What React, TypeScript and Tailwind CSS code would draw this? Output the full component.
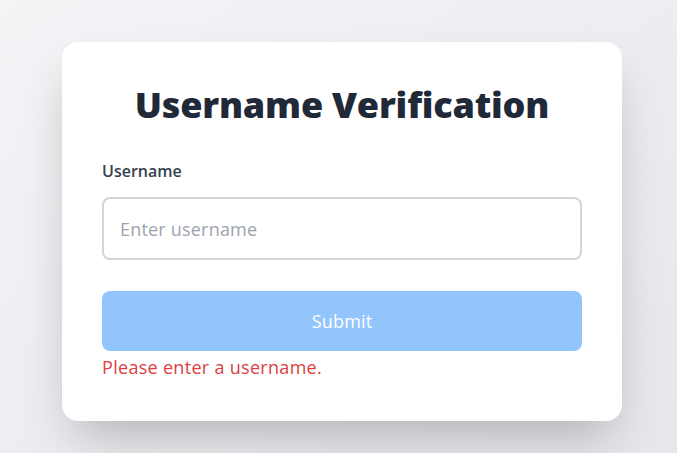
import { useState } from 'react';

export default function App() {
    const [username, setUsername] = useState('');
    const [error] = useState('Please enter a username.');

    return (
        <div
            className="min-h-screen w-full bg-gradient-to-br from-[#f3f4f6] to-[#e5e7eb] pt-[42px] pl-[62px]"
            style={{ fontFamily: '"Open Sans", "Noto Sans", sans-serif' }}
        >
            <div className="w-[560px] bg-white rounded-2xl shadow-[0_25px_50px_-12px_rgba(0,0,0,0.25)] px-10 pt-[43px] pb-10">
                <h1 className="text-[36px] leading-10 font-extrabold text-[#1f2937] text-center tracking-[-0.2px] mb-[34px]">
                    Username Verification
                </h1>
                <form onSubmit={(e) => e.preventDefault()}>
                    <label className="block text-base leading-6 font-semibold text-[#374151] mb-[14px]">Username</label>
                    <input
                        value={username}
                        onChange={(e) => setUsername(e.target.value)}
                        placeholder="Enter username"
                        className="w-full h-[63px] border-2 border-[#d1d5db] rounded-lg px-4 text-lg tracking-[0.2px] text-[#1f2937] placeholder:text-[#9ca3af] outline-none"
                    />
                    <button
                        type="submit"
                        disabled
                        className="w-full h-[60px] mt-[31px] rounded-lg bg-[#93c5fd] text-white text-lg tracking-[0.2px]"
                    >
                        Submit
                    </button>
                    <p className="text-lg leading-7 tracking-[0.3px] text-[#dc3f3f] mt-[2px]">{error}</p>
                </form>
            </div>
        </div>
    );
}
